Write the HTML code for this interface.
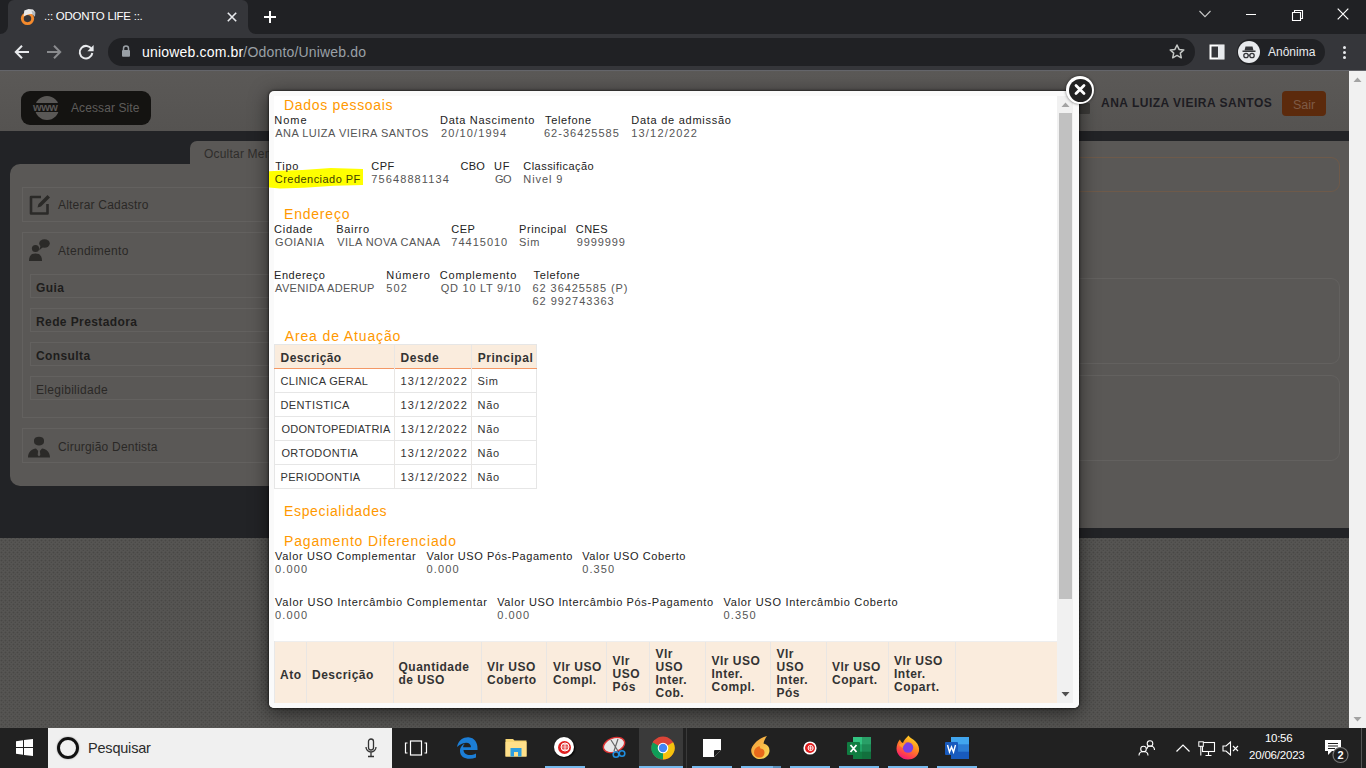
<!DOCTYPE html>
<html><head><meta charset="utf-8">
<style>
*{box-sizing:border-box;margin:0;padding:0}
html,body{width:1366px;height:768px;overflow:hidden}
body{position:relative;background:#202124;font-family:"Liberation Sans",sans-serif}
.a{position:absolute}
.t{position:absolute;white-space:nowrap;line-height:1}
</style></head><body>

<!-- ===== Chrome tab strip ===== -->
<div class="a" style="left:0;top:0;width:1366px;height:34px;background:#202124"></div>
<div class="a" style="left:8px;top:0;width:240px;height:34px;background:#35363a;border-radius:6px 6px 0 0"></div>
<svg class="a" style="left:0;top:26px" width="8" height="8"><path d="M8 0 V8 H0 A8 8 0 0 0 8 0Z" fill="#35363a"/></svg>
<svg class="a" style="left:248px;top:26px" width="8" height="8"><path d="M0 0 V8 H8 A8 8 0 0 1 0 0Z" fill="#35363a"/></svg>
<!-- favicon -->
<svg class="a" style="left:16px;top:6px" width="24" height="24" viewBox="0 0 24 24"><ellipse cx="11.5" cy="12.6" rx="5.2" ry="5" fill="none" stroke="#f58a2c" stroke-width="2.9"/><path d="M7.5 10.5 L8.3 4.5 L12.5 3 L17 3.6 L19.2 6.2 L19 10.5 L16.5 8.2 C13.5 7.8 10.5 8.8 7.5 10.5Z" fill="#e9e9e9"/><path d="M15.5 4.5 L19.2 6.2 L19 10.5 L16.5 8.2Z" fill="#b4b8bc"/></svg>
<div class="t" style="left:44px;top:11px;font-size:11.5px;color:#fff;letter-spacing:-0.25px">.:: ODONTO LIFE ::.</div>
<svg class="a" style="left:224px;top:9px" width="16" height="16"><path d="M3.8 3.8 L12.2 12.2 M12.2 3.8 L3.8 12.2" stroke="#e8eaed" stroke-width="1.6"/></svg>
<svg class="a" style="left:262px;top:9px" width="16" height="16"><path d="M8 2 V14 M2 8 H14" stroke="#fff" stroke-width="2"/></svg>
<!-- window controls -->
<svg class="a" style="left:1198px;top:8px" width="14" height="12"><path d="M1.5 3 L7 8.7 L12.5 3" stroke="#c8c8c8" stroke-width="1.1" fill="none"/></svg>
<div class="a" style="left:1246px;top:14px;width:10px;height:1px;background:#fff"></div>
<svg class="a" style="left:1290px;top:8px" width="14" height="14"><path d="M2.5 4.5 H10.5 V12.5 H2.5 Z M4.5 4.5 V2.5 H12.5 V10.5 H10.5" stroke="#fff" stroke-width="1.1" fill="none"/></svg>
<svg class="a" style="left:1336px;top:7px" width="14" height="14"><path d="M1.7 1.7 L12.3 12.3 M12.3 1.7 L1.7 12.3" stroke="#fff" stroke-width="1.2"/></svg>

<!-- ===== Chrome toolbar ===== -->
<div class="a" style="left:0;top:34px;width:1366px;height:36px;background:#35363a"></div>
<div class="a" style="left:0;top:70px;width:1366px;height:1px;background:#64656a"></div>
<svg class="a" style="left:12px;top:42px" width="20" height="20"><path d="M17 10 H4.5 M10 3.8 L3.8 10 L10 16.2" stroke="#e8eaed" stroke-width="2" fill="none"/></svg>
<svg class="a" style="left:44px;top:42px" width="20" height="20"><path d="M3 10 H15.5 M10 3.8 L16.2 10 L10 16.2" stroke="#8a8b8e" stroke-width="2" fill="none"/></svg>
<svg class="a" style="left:76px;top:42px" width="20" height="20"><path d="M15.6 7.2 A6.3 6.3 0 1 0 16.3 11" stroke="#e8eaed" stroke-width="2" fill="none"/><path d="M17.6 3 V9.2 H11.4 Z" fill="#e8eaed"/></svg>
<div class="a" style="left:108px;top:38px;width:1087px;height:28px;background:#202124;border-radius:14px"></div>
<svg class="a" style="left:120px;top:44px" width="12" height="14"><path d="M3.5 6 V4.5 A2.5 2.5 0 0 1 8.5 4.5 V6" stroke="#9aa0a6" stroke-width="1.5" fill="none"/><rect x="2" y="6" width="8" height="6.8" rx="1" fill="#9aa0a6"/></svg>
<div class="t" style="left:142px;top:45px;font-size:14px;color:#fff;letter-spacing:0.18px">unioweb.com.br<span style="color:#9aa0a6">/Odonto/Uniweb.do</span></div>
<svg class="a" style="left:1168px;top:43px" width="18" height="18" viewBox="0 0 18 18"><path d="M9 2 L11.1 6.4 L15.8 6.9 L12.3 10.1 L13.3 14.8 L9 12.4 L4.7 14.8 L5.7 10.1 L2.2 6.9 L6.9 6.4 Z" stroke="#c4c7c5" stroke-width="1.5" fill="none" stroke-linejoin="round"/></svg>
<svg class="a" style="left:1209px;top:44px" width="16" height="16"><rect x="1.5" y="1.5" width="13" height="13" fill="none" stroke="#fff" stroke-width="2"/><rect x="9" y="1" width="6" height="14" fill="#e8eaed"/></svg>
<div class="a" style="left:1237px;top:39px;width:88px;height:26px;background:#202124;border-radius:13px"></div>
<div class="a" style="left:1238px;top:41px;width:22px;height:22px;border-radius:50%;background:#e8eaed"></div>
<svg class="a" style="left:1238px;top:41px" width="22" height="22" viewBox="0 0 22 22"><path d="M7.5 5.5 H14.5 L15.5 9.5 H6.5 Z" fill="#35363a"/><rect x="4.5" y="9.5" width="13" height="1.5" fill="#35363a"/><circle cx="8" cy="14.5" r="2.2" fill="none" stroke="#35363a" stroke-width="1.3"/><circle cx="14" cy="14.5" r="2.2" fill="none" stroke="#35363a" stroke-width="1.3"/><path d="M10.2 14.3 H11.8" stroke="#35363a" stroke-width="1.2"/></svg>
<div class="t" style="left:1268px;top:46px;font-size:12px;color:#e8eaed">Anônima</div>
<div class="a" style="left:1343px;top:46px;width:3px;height:3px;border-radius:50%;background:#e8eaed"></div>
<div class="a" style="left:1343px;top:51px;width:3px;height:3px;border-radius:50%;background:#e8eaed"></div>
<div class="a" style="left:1343px;top:56px;width:3px;height:3px;border-radius:50%;background:#e8eaed"></div>

<!-- ===== Page (dimmed) ===== -->
<div class="a" style="left:0;top:71px;width:1349px;height:657px;background-color:#565553;background-image:radial-gradient(circle at 1.5px 1.5px,#494846 0.7px,transparent 1.2px),radial-gradient(circle at 3.5px 3.5px,#4b4a48 0.7px,transparent 1.2px);background-size:4px 4px,4px 4px"></div>
<div class="a" style="left:0;top:71px;width:1349px;height:60px;background:linear-gradient(#5b5957,#555351)"></div>
<div class="a" style="left:0;top:131px;width:1349px;height:407px;background:#222326"></div>
<!-- main panel right -->
<div class="a" style="left:290px;top:141px;width:1059px;height:387px;background:#5a5856"></div>
<div class="a" style="left:700px;top:157px;width:640px;height:35px;border:1px solid #6e5a4a;border-radius:9px"></div>
<div class="a" style="left:700px;top:278px;width:640px;height:86px;border:1px solid #63615f;border-radius:9px"></div>
<div class="a" style="left:700px;top:375px;width:640px;height:86px;border:1px solid #63615f;border-radius:9px"></div>
<!-- Ocultar menu tab + sidebar -->
<div class="a" style="left:190px;top:141px;width:100px;height:30px;background:#5a5856;border-radius:7px 7px 0 0"></div>
<div class="t" style="left:204px;top:148px;font-size:12px;color:#2f2d2b;letter-spacing:0.2px">Ocultar Menu</div>
<div class="a" style="left:10px;top:164px;width:300px;height:322px;background:#5a5856;border-radius:10px"></div>
<!-- sidebar items -->
<div class="a" style="left:22px;top:187px;width:300px;height:35px;border:1px solid #63615f"></div>
<svg class="a" style="left:28px;top:193px" width="24" height="23" viewBox="0 0 24 23"><path d="M13 4 H3 V20.5 H19.5 V11" stroke="#2b2a28" stroke-width="2.6" fill="none" stroke-linejoin="round"/><path d="M9.5 14.5 L10.5 11 L19.5 2 L22 4.5 L13 13.5 Z" fill="#2b2a28"/></svg>
<div class="t" style="left:58px;top:199px;font-size:12px;color:#2a2826;letter-spacing:0.2px">Alterar Cadastro</div>

<div class="a" style="left:22px;top:232px;width:300px;height:186px;border:1px solid #63615f"></div>
<svg class="a" style="left:28px;top:238px" width="24" height="24" viewBox="0 0 24 24"><circle cx="7.5" cy="10.5" r="3.6" fill="#2b2a28"/><path d="M1 23 C1 17.5 3.5 15.5 7.5 15.5 C11.5 15.5 14 17.5 14 23 Z" fill="#2b2a28"/><ellipse cx="16.5" cy="5.5" rx="5.3" ry="4.2" fill="#2b2a28"/><path d="M12.5 8 L11 12.5 L15 9Z" fill="#2b2a28"/></svg>
<div class="t" style="left:58px;top:245px;font-size:12px;color:#2a2826;letter-spacing:0.3px">Atendimento</div>
<div class="a" style="left:30px;top:274px;width:300px;height:24px;border:1px solid #63615f"></div>
<div class="t" style="left:36px;top:282px;font-size:12px;font-weight:bold;color:#1e1d1c;letter-spacing:0.4px">Guia</div>
<div class="a" style="left:30px;top:308px;width:300px;height:24px;border:1px solid #63615f"></div>
<div class="t" style="left:36px;top:316px;font-size:12px;font-weight:bold;color:#1e1d1c;letter-spacing:0.4px">Rede Prestadora</div>
<div class="a" style="left:30px;top:342px;width:300px;height:24px;border:1px solid #63615f"></div>
<div class="t" style="left:36px;top:350px;font-size:12px;font-weight:bold;color:#1e1d1c;letter-spacing:0.4px">Consulta</div>
<div class="a" style="left:30px;top:376px;width:300px;height:24px;border:1px solid #63615f"></div>
<div class="t" style="left:36px;top:384px;font-size:12px;color:#2a2826;letter-spacing:0.3px">Elegibilidade</div>

<div class="a" style="left:22px;top:428px;width:300px;height:35px;border:1px solid #63615f"></div>
<svg class="a" style="left:27px;top:434px" width="24" height="24" viewBox="0 0 24 24"><path d="M7 6 C7 1.5 17 1.5 17 6 V8 C17 12.5 7 12.5 7 8 Z" fill="#2b2a28"/><path d="M1 23.5 C1 17.5 5 15 9 14.5 L12 18 L15 14.5 C19 15 23 17.5 23 23.5 Z" fill="#2b2a28"/><path d="M11.2 16 L12.8 16 L13.3 21 L12 22.5 L10.7 21 Z" fill="#5a5856"/></svg>
<div class="t" style="left:58px;top:441px;font-size:12px;color:#2a2826;letter-spacing:0.2px">Cirurgião Dentista</div>

<!-- header -->
<div class="a" style="left:21px;top:91px;width:130px;height:34px;background:#141311;border-radius:9px"></div>
<div class="a" style="left:35px;top:96px;width:24px;height:24px;border-radius:50%;background:#5a5856"></div>
<div class="a" style="left:33px;top:103px;width:28px;height:9px;background:#141311"></div>
<div class="t" style="left:33px;top:102px;font-size:11px;font-weight:bold;color:#5a5856;letter-spacing:-0.4px">www</div>
<div class="t" style="left:71px;top:102px;font-size:12px;color:#5e5c5a;letter-spacing:0.1px">Acessar Site</div>
<div class="a" style="left:1079px;top:103px;width:11px;height:11px;background:#3b3a38;border-radius:1px"></div>
<div class="t" style="left:1101px;top:97px;font-size:12px;font-weight:bold;color:#1d1c22;letter-spacing:0.5px">ANA LUIZA VIEIRA SANTOS</div>
<div class="a" style="left:1282px;top:91px;width:44px;height:25px;background:#5c2a0c;border-radius:4px"></div>
<div class="t" style="left:1293px;top:99px;font-size:12.5px;color:#7e5a46">Sair</div>

<!-- page scrollbar -->
<div class="a" style="left:1349px;top:71px;width:17px;height:657px;background:#f1f1f1"></div>
<svg class="a" style="left:1349px;top:71px" width="17" height="17"><path d="M4.5 11 L8.5 6.5 L12.5 11Z" fill="#a3a3a3"/></svg>
<svg class="a" style="left:1349px;top:711px" width="17" height="17"><path d="M4.5 6 L8.5 10.5 L12.5 6Z" fill="#a3a3a3"/></svg>


<!-- ===== Modal ===== -->
<div class="a" style="left:269px;top:91px;width:810px;height:617px;background:#fafafa;border-radius:5px;box-shadow:0 4px 18px 1px rgba(0,0,0,.5),0 0 2px 1px rgba(0,0,0,.45)"></div>
<div class="a" style="left:274px;top:96px;width:799px;height:607px;background:#fff;overflow:hidden"></div>
<!-- highlight -->
<svg class="a" style="left:269px;top:167px" width="95" height="23" viewBox="0 0 95 23"><path d="M0 4.3 L10 3.8 L33.6 3 L61.8 1 L94 1.9 V18 L65 18.8 L35 20.8 L11 21.6 L0 20.4Z" fill="#ffff00"/></svg>
<!-- table 1 -->
<div class="a" style="left:274px;top:344px;width:263px;height:145px;border:1px solid #e6e6e6;background:#fff"></div>
<div class="a" style="left:275px;top:345px;width:261px;height:23px;background:#faecdd"></div>
<div class="a" style="left:274px;top:368px;width:263px;height:1px;background:#f39866"></div>
<div class="a" style="left:394px;top:345px;width:1px;height:143px;background:#e9e6e3"></div>
<div class="a" style="left:471px;top:345px;width:1px;height:143px;background:#e9e6e3"></div>
<div class="a" style="left:275px;top:392px;width:261px;height:1px;background:#e6e6e6"></div>
<div class="a" style="left:275px;top:416px;width:261px;height:1px;background:#e6e6e6"></div>
<div class="a" style="left:275px;top:440px;width:261px;height:1px;background:#e6e6e6"></div>
<div class="a" style="left:275px;top:464px;width:261px;height:1px;background:#e6e6e6"></div>
<div class="t" style="left:284.0px;top:98px;font-size:14px;color:#ff9900;letter-spacing:0.69px">Dados pessoais</div>
<div class="t" style="left:284.0px;top:207px;font-size:14px;color:#ff9900;letter-spacing:0.79px">Endereço</div>
<div class="t" style="left:284.7px;top:329px;font-size:14px;color:#ff9900;letter-spacing:0.87px">Area de Atuação</div>
<div class="t" style="left:284.0px;top:504px;font-size:14px;color:#ff9900;letter-spacing:0.65px">Especialidades</div>
<div class="t" style="left:284.0px;top:534px;font-size:14px;color:#ff9900;letter-spacing:0.85px">Pagamento Diferenciado</div>
<div class="t" style="left:274.3px;top:115px;font-size:11px;color:#222;letter-spacing:1.0px">Nome</div>
<div class="t" style="left:440.0px;top:115px;font-size:11px;color:#222;letter-spacing:0.71px">Data Nascimento</div>
<div class="t" style="left:545.0px;top:115px;font-size:11px;color:#222;letter-spacing:0.63px">Telefone</div>
<div class="t" style="left:631.3px;top:115px;font-size:11px;color:#222;letter-spacing:0.73px">Data de admissão</div>
<div class="t" style="left:275.2px;top:128px;font-size:11px;color:#555;letter-spacing:0.5px">ANA LUIZA VIEIRA SANTOS</div>
<div class="t" style="left:441.0px;top:128px;font-size:11px;color:#555;letter-spacing:1.11px">20/10/1994</div>
<div class="t" style="left:544.0px;top:128px;font-size:11px;color:#555;letter-spacing:1.0px">62-36425585</div>
<div class="t" style="left:631.3px;top:128px;font-size:11px;color:#555;letter-spacing:1.17px">13/12/2022</div>
<div class="t" style="left:275.3px;top:161px;font-size:11px;color:#222;letter-spacing:0.7px">Tipo</div>
<div class="t" style="left:371.3px;top:161px;font-size:11px;color:#222;letter-spacing:0.4px">CPF</div>
<div class="t" style="left:460.4px;top:161px;font-size:11px;color:#222;letter-spacing:0.35px">CBO</div>
<div class="t" style="left:494.0px;top:161px;font-size:11px;color:#222;letter-spacing:0.8px">UF</div>
<div class="t" style="left:523.3px;top:161px;font-size:11px;color:#222;letter-spacing:0.46px">Classificação</div>
<div class="t" style="left:274.8px;top:174px;font-size:11px;color:#404000;letter-spacing:0.46px">Credenciado PF</div>
<div class="t" style="left:371.3px;top:174px;font-size:11px;color:#555;letter-spacing:1.1px">75648881134</div>
<div class="t" style="left:495.0px;top:174px;font-size:11px;color:#555;letter-spacing:-0.6px">GO</div>
<div class="t" style="left:523.3px;top:174px;font-size:11px;color:#555;letter-spacing:0.92px">Nivel 9</div>
<div class="t" style="left:274.1px;top:224px;font-size:11px;color:#222;letter-spacing:0.7px">Cidade</div>
<div class="t" style="left:336.2px;top:224px;font-size:11px;color:#222;letter-spacing:0.7px">Bairro</div>
<div class="t" style="left:451.3px;top:224px;font-size:11px;color:#222;letter-spacing:0.4px">CEP</div>
<div class="t" style="left:519.0px;top:224px;font-size:11px;color:#222;letter-spacing:0.62px">Principal</div>
<div class="t" style="left:575.8px;top:224px;font-size:11px;color:#222;letter-spacing:0.4px">CNES</div>
<div class="t" style="left:275.1px;top:237px;font-size:11px;color:#555;letter-spacing:0.52px">GOIANIA</div>
<div class="t" style="left:337.2px;top:237px;font-size:11px;color:#555;letter-spacing:0.43px">VILA NOVA CANAA</div>
<div class="t" style="left:451.3px;top:237px;font-size:11px;color:#555;letter-spacing:1.0px">74415010</div>
<div class="t" style="left:519.0px;top:237px;font-size:11px;color:#555;letter-spacing:0.7px">Sim</div>
<div class="t" style="left:576.8px;top:237px;font-size:11px;color:#555;letter-spacing:0.88px">9999999</div>
<div class="t" style="left:274.1px;top:270px;font-size:11px;color:#222;letter-spacing:0.53px">Endereço</div>
<div class="t" style="left:386.3px;top:270px;font-size:11px;color:#222;letter-spacing:0.9px">Número</div>
<div class="t" style="left:439.8px;top:270px;font-size:11px;color:#222;letter-spacing:0.8px">Complemento</div>
<div class="t" style="left:533.5px;top:270px;font-size:11px;color:#222;letter-spacing:0.63px">Telefone</div>
<div class="t" style="left:275.1px;top:283px;font-size:11px;color:#555;letter-spacing:0.32px">AVENIDA ADERUP</div>
<div class="t" style="left:386.3px;top:283px;font-size:11px;color:#555;letter-spacing:1.1px">502</div>
<div class="t" style="left:440.8px;top:283px;font-size:11px;color:#555;letter-spacing:0.73px">QD 10 LT 9/10</div>
<div class="t" style="left:532.5px;top:283px;font-size:11px;color:#555;letter-spacing:0.93px">62 36425585 (P)</div>
<div class="t" style="left:532.5px;top:296px;font-size:11px;color:#555;letter-spacing:0.99px">62 992743363</div>
<div class="t" style="left:280.6px;top:352px;font-size:12px;font-weight:bold;color:#333;letter-spacing:0.4px">Descrição</div>
<div class="t" style="left:400.6px;top:352px;font-size:12px;font-weight:bold;color:#333;letter-spacing:0.5px">Desde</div>
<div class="t" style="left:477.7px;top:352px;font-size:12px;font-weight:bold;color:#333;letter-spacing:0.55px">Principal</div>
<div class="t" style="left:280.4px;top:376px;font-size:11px;color:#333;letter-spacing:0.37px">CLINICA GERAL</div>
<div class="t" style="left:400.4px;top:376px;font-size:11px;color:#333;letter-spacing:1.27px">13/12/2022</div>
<div class="t" style="left:477.5px;top:376px;font-size:11px;color:#333;letter-spacing:0.7px">Sim</div>
<div class="t" style="left:280.4px;top:400px;font-size:11px;color:#333;letter-spacing:0.4px">DENTISTICA</div>
<div class="t" style="left:400.4px;top:400px;font-size:11px;color:#333;letter-spacing:1.27px">13/12/2022</div>
<div class="t" style="left:477.5px;top:400px;font-size:11px;color:#333;letter-spacing:0.7px">Não</div>
<div class="t" style="left:281.4px;top:424px;font-size:11px;color:#333;letter-spacing:0.25px">ODONTOPEDIATRIA</div>
<div class="t" style="left:400.4px;top:424px;font-size:11px;color:#333;letter-spacing:1.27px">13/12/2022</div>
<div class="t" style="left:477.5px;top:424px;font-size:11px;color:#333;letter-spacing:0.7px">Não</div>
<div class="t" style="left:281.4px;top:448px;font-size:11px;color:#333;letter-spacing:0.4px">ORTODONTIA</div>
<div class="t" style="left:400.4px;top:448px;font-size:11px;color:#333;letter-spacing:1.27px">13/12/2022</div>
<div class="t" style="left:477.5px;top:448px;font-size:11px;color:#333;letter-spacing:0.7px">Não</div>
<div class="t" style="left:280.4px;top:472px;font-size:11px;color:#333;letter-spacing:0.4px">PERIODONTIA</div>
<div class="t" style="left:400.4px;top:472px;font-size:11px;color:#333;letter-spacing:1.27px">13/12/2022</div>
<div class="t" style="left:477.5px;top:472px;font-size:11px;color:#333;letter-spacing:0.7px">Não</div>
<div class="t" style="left:275.1px;top:551px;font-size:11px;color:#222;letter-spacing:0.65px">Valor USO Complementar</div>
<div class="t" style="left:426.6px;top:551px;font-size:11px;color:#222;letter-spacing:0.55px">Valor USO Pós-Pagamento</div>
<div class="t" style="left:582.2px;top:551px;font-size:11px;color:#222;letter-spacing:0.58px">Valor USO Coberto</div>
<div class="t" style="left:275.1px;top:564px;font-size:11px;color:#555;letter-spacing:1.1px">0.000</div>
<div class="t" style="left:426.6px;top:564px;font-size:11px;color:#555;letter-spacing:1.1px">0.000</div>
<div class="t" style="left:582.2px;top:564px;font-size:11px;color:#555;letter-spacing:1.1px">0.350</div>
<div class="t" style="left:275.1px;top:597px;font-size:11px;color:#222;letter-spacing:0.74px">Valor USO Intercâmbio Complementar</div>
<div class="t" style="left:497.2px;top:597px;font-size:11px;color:#222;letter-spacing:0.64px">Valor USO Intercâmbio Pós-Pagamento</div>
<div class="t" style="left:723.6px;top:597px;font-size:11px;color:#222;letter-spacing:0.7px">Valor USO Intercâmbio Coberto</div>
<div class="t" style="left:275.1px;top:610px;font-size:11px;color:#555;letter-spacing:1.1px">0.000</div>
<div class="t" style="left:497.2px;top:610px;font-size:11px;color:#555;letter-spacing:1.1px">0.000</div>
<div class="t" style="left:723.6px;top:610px;font-size:11px;color:#555;letter-spacing:1.1px">0.350</div>
<!-- table 2 header -->
<div class="a" style="left:274px;top:641px;width:783px;height:62px;background:#faecdd;border-top:1px solid #eee"></div>
<div class="a" style="left:274px;top:641px;width:1px;height:62px;background:#e8e8e8"></div>
<div class="a" style="left:306px;top:642px;width:1px;height:61px;background:#e9e6e3"></div>
<div class="a" style="left:393px;top:642px;width:1px;height:61px;background:#e9e6e3"></div>
<div class="a" style="left:481px;top:642px;width:1px;height:61px;background:#e9e6e3"></div>
<div class="a" style="left:546px;top:642px;width:1px;height:61px;background:#e9e6e3"></div>
<div class="a" style="left:606px;top:642px;width:1px;height:61px;background:#e9e6e3"></div>
<div class="a" style="left:649px;top:642px;width:1px;height:61px;background:#e9e6e3"></div>
<div class="a" style="left:705px;top:642px;width:1px;height:61px;background:#e9e6e3"></div>
<div class="a" style="left:770px;top:642px;width:1px;height:61px;background:#e9e6e3"></div>
<div class="a" style="left:826px;top:642px;width:1px;height:61px;background:#e9e6e3"></div>
<div class="a" style="left:888px;top:642px;width:1px;height:61px;background:#e9e6e3"></div>
<div class="a" style="left:955px;top:642px;width:1px;height:61px;background:#e9e6e3"></div>
<div class="t" style="left:280px;top:669px;font-size:12px;font-weight:bold;color:#333;letter-spacing:0.5px">Ato</div>
<div class="t" style="left:312px;top:669px;font-size:12px;font-weight:bold;color:#333;letter-spacing:0.5px">Descrição</div>
<div class="t" style="left:398.5px;top:661px;font-size:12px;font-weight:bold;color:#333;letter-spacing:0.5px;line-height:13px">Quantidade<br>de USO</div>
<div class="t" style="left:487px;top:661px;font-size:12px;font-weight:bold;color:#333;letter-spacing:0.5px;line-height:13px">Vlr USO<br>Coberto</div>
<div class="t" style="left:553px;top:661px;font-size:12px;font-weight:bold;color:#333;letter-spacing:0.5px;line-height:13px">Vlr USO<br>Compl.</div>
<div class="t" style="left:612.5px;top:655px;font-size:12px;font-weight:bold;color:#333;letter-spacing:0.5px;line-height:13px">Vlr<br>USO<br>Pós</div>
<div class="t" style="left:655.5px;top:648px;font-size:12px;font-weight:bold;color:#333;letter-spacing:0.5px;line-height:13px">Vlr<br>USO<br>Inter.<br>Cob.</div>
<div class="t" style="left:711.5px;top:655px;font-size:12px;font-weight:bold;color:#333;letter-spacing:0.5px;line-height:13px">Vlr USO<br>Inter.<br>Compl.</div>
<div class="t" style="left:776.5px;top:648px;font-size:12px;font-weight:bold;color:#333;letter-spacing:0.5px;line-height:13px">Vlr<br>USO<br>Inter.<br>Pós</div>
<div class="t" style="left:832px;top:661px;font-size:12px;font-weight:bold;color:#333;letter-spacing:0.5px;line-height:13px">Vlr USO<br>Copart.</div>
<div class="t" style="left:894px;top:655px;font-size:12px;font-weight:bold;color:#333;letter-spacing:0.5px;line-height:13px">Vlr USO<br>Inter.<br>Copart.</div>
<!-- white strip over table bottom (modal padding) -->
<div class="a" style="left:269px;top:703px;width:810px;height:5px;background:#fafafa;border-radius:0 0 5px 5px"></div>
<!-- modal scrollbar -->
<div class="a" style="left:1057px;top:96px;width:16px;height:607px;background:#f1f1f1"></div>
<div class="a" style="left:1059px;top:113px;width:13px;height:486px;background:#c1c1c1"></div>
<svg class="a" style="left:1057px;top:96px" width="16" height="16"><path d="M4.5 11 L8.5 6.5 L12.5 11Z" fill="#a3a3a3"/></svg>
<svg class="a" style="left:1057px;top:687px" width="16" height="16"><path d="M4.5 5 L8.5 9.5 L12.5 5Z" fill="#505050"/></svg>
<!-- close button -->
<div class="a" style="left:1066px;top:76px;width:28px;height:28px;border-radius:50%;background:#fff;box-shadow:0 0 3px rgba(0,0,0,.6)"></div>
<div class="a" style="left:1068.5px;top:78.5px;width:23px;height:23px;border-radius:50%;background:#222"></div>
<svg class="a" style="left:1066px;top:76px" width="28" height="28"><path d="M10 9.6 L18 17.6 M18 9.6 L10 17.6" stroke="#fff" stroke-width="2.8" stroke-linecap="round"/></svg>

<!-- ===== Taskbar ===== -->
<div class="a" style="left:0;top:728px;width:1366px;height:40px;background:#212121"></div>
<svg class="a" style="left:16px;top:739px" width="17" height="17" viewBox="0 0 17 17"><path d="M0 2.3 L7 1.3 V8 H0Z M8 1.1 L17 0 V8 H8Z M0 9 H7 V15.7 L0 14.7Z M8 9 H17 V17 L8 15.9Z" fill="#fff"/></svg>
<div class="a" style="left:48px;top:728px;width:344px;height:40px;background:#f0f0f0"></div>
<div class="a" style="left:57px;top:737px;width:22px;height:22px;border-radius:50%;border:3px solid #111;box-shadow:0 0 1.5px #777"></div>
<div class="t" style="left:88px;top:741px;font-size:14.5px;color:#2b2b2b;letter-spacing:-0.2px">Pesquisar</div>
<svg class="a" style="left:364px;top:738px" width="14" height="20" viewBox="0 0 14 20"><rect x="4.5" y="1" width="5" height="11" rx="2.5" fill="none" stroke="#333" stroke-width="1.3"/><path d="M2 9 A5 5 0 0 0 12 9 M7 14 V18 M4 18.5 H10" fill="none" stroke="#333" stroke-width="1.3"/></svg>
<!-- task view -->
<svg class="a" style="left:404px;top:740px" width="24" height="16" viewBox="0 0 24 16"><rect x="6.5" y="1" width="11" height="14" fill="none" stroke="#fff" stroke-width="1.2"/><path d="M3.5 3 H1.5 V13 H3.5 M20.5 3 H22.5 V13 H20.5" fill="none" stroke="#fff" stroke-width="1.2"/></svg>
<!-- edge -->
<svg class="a" style="left:456px;top:737px" width="22" height="22" viewBox="0 0 22 22"><path d="M1 10 C2 3 8 0 12.5 0.3 C18.5 0.8 21.5 5.5 21.5 11.5 V13 H7.5 C7.8 18 14 19.5 20 16.5 V20.5 C13 23.5 4 21.5 4 14 C4 10 6.5 7.5 9 6.5 C7.5 8 7 9.5 7.2 10.2 H15 C15 5 8.5 3.5 1 10Z" fill="#1c7ed6"/></svg>
<!-- explorer -->
<svg class="a" style="left:505px;top:738px" width="22" height="20" viewBox="0 0 22 20"><path d="M0.5 1 H8 L9.5 2.5 H21.5 V18.5 H0.5Z" fill="#f8d775"/><path d="M0.5 4 H21.5 V18.5 H0.5Z" fill="#ffe08a"/><path d="M5.5 10 H16.5 V18.5 H13 V14 H9 V18.5 H5.5Z" fill="#2d9fe0"/></svg>
<!-- red globe app -->
<div class="a" style="left:554px;top:737px;width:20px;height:20px;border-radius:50%;background:#fff;box-shadow:1px 1px 2px #000"></div>
<div class="a" style="left:557.5px;top:740.5px;width:13px;height:13px;border-radius:50%;background:#e02020"></div>
<svg class="a" style="left:557px;top:740px" width="14" height="14" viewBox="0 0 14 14"><circle cx="8" cy="7" r="4" fill="none" stroke="#fff" stroke-width="1"/><path d="M4 7 H12 M8 3 V11 M5 4.8 H11 M5 9.2 H11" stroke="#fff" stroke-width=".8"/></svg>
<div class="a" style="left:545px;top:766px;width:40px;height:2px;background:#76b9ed"></div>
<!-- snipping -->
<svg class="a" style="left:602px;top:736px" width="26" height="24" viewBox="0 0 26 24"><ellipse cx="12" cy="9" rx="11" ry="7" fill="#e8e8e8" stroke="#d33" stroke-width="1.4" transform="rotate(-20 12 9)"/><path d="M9 4 L16 15 M16 3 L12 15" stroke="#666" stroke-width="1.2"/><circle cx="14" cy="18.5" r="2.8" fill="none" stroke="#1f8fe0" stroke-width="1.6"/><circle cx="20" cy="17.5" r="2.8" fill="none" stroke="#1f8fe0" stroke-width="1.6"/></svg>
<!-- chrome active -->
<div class="a" style="left:639px;top:728px;width:44px;height:40px;background:#3a3a3a"></div>
<svg class="a" style="left:651px;top:736px" width="24" height="24" viewBox="0 0 24 24"><circle cx="12" cy="12" r="11.5" fill="#db4437"/><path d="M12 12 L22.2 6.3 A11.5 11.5 0 0 1 12 23.5Z" fill="#f4c20d"/><path d="M12 12 L12 23.5 A11.5 11.5 0 0 1 1.8 6.3Z" fill="#0f9d58"/><path d="M12 12 L1.8 6.3 A11.5 11.5 0 0 1 3.5 4Z" fill="#db4437"/><circle cx="12" cy="12" r="5.3" fill="#fff"/><circle cx="12" cy="12" r="4.2" fill="#4285f4"/></svg>
<div class="a" style="left:639px;top:766px;width:44px;height:2px;background:#76b9ed"></div>
<div class="a" style="left:686px;top:728px;width:1px;height:40px;background:#3a3a3a"></div>
<!-- sticky notes -->
<svg class="a" style="left:702px;top:738px" width="20" height="20" viewBox="0 0 20 20"><path d="M1 1 H19 V12 L12 19 H1Z" fill="#fff"/><path d="M12 19 L19 12 H13 Q12 12 12 13Z" fill="#1f1f1f"/></svg>
<div class="a" style="left:692px;top:766px;width:40px;height:2px;background:#76b9ed"></div>
<!-- flame app -->
<svg class="a" style="left:750px;top:735px" width="22" height="25" viewBox="0 0 22 25"><defs><linearGradient id="fg" x1="0" y1="0" x2="1" y2="1"><stop offset="0" stop-color="#f39a3a"/><stop offset=".6" stop-color="#f8c04a"/><stop offset="1" stop-color="#f6e05a"/></linearGradient></defs><path d="M17 1 C12 2 4 6.5 1.5 13.5 C0 18.5 4 24 10 24 C15.5 24 19.5 20 19.5 15.5 C19.5 12 17.5 9.5 13.5 8.5 C14 5.5 15.5 3 17 1Z" fill="url(#fg)"/><path d="M9.5 11 C6 12 4 14.5 4 17.5 C4 20.5 6.5 22.5 9.5 22.5 C12.5 22.5 14.5 20.5 14.5 17.5 C14.5 15 12.5 13.5 10.5 13.5 C10 12.5 9.5 11.8 9.5 11Z" fill="#e8691b"/></svg>
<div class="a" style="left:741px;top:766px;width:32px;height:2px;background:#76b9ed"></div><div class="a" style="left:773px;top:766px;width:8px;height:2px;background:#5a8fba"></div>
<!-- small red -->
<svg class="a" style="left:802px;top:740px" width="16" height="16" viewBox="0 0 16 16"><circle cx="8" cy="8" r="6.6" fill="#fff"/><circle cx="8" cy="8" r="5" fill="#e21b1b"/><circle cx="8.6" cy="8" r="2.6" fill="none" stroke="#fff" stroke-width=".9"/><path d="M8.6 5.4 V10.6 M6 8 H11.2" stroke="#fff" stroke-width=".8"/></svg>
<div class="a" style="left:790px;top:766px;width:40px;height:2px;background:#76b9ed"></div>
<!-- excel -->
<svg class="a" style="left:847px;top:737px" width="24" height="22" viewBox="0 0 24 22"><rect x="6" y="0" width="18" height="22" rx="1" fill="#21a366"/><rect x="6" y="0" width="18" height="7.3" fill="#33c481"/><rect x="6" y="14.7" width="18" height="7.3" fill="#107c41"/><rect x="15" y="0" width="9" height="22" fill="#185c37" opacity=".35"/><rect x="0" y="5" width="13" height="13" rx="1" fill="#107c41"/><path d="M3.5 8 L9.5 15 M9.5 8 L3.5 15" stroke="#fff" stroke-width="1.8"/></svg>
<div class="a" style="left:839px;top:766px;width:40px;height:2px;background:#76b9ed"></div>
<!-- firefox -->
<svg class="a" style="left:896px;top:735px" width="24" height="25" viewBox="0 0 24 25"><defs><linearGradient id="ffg" x1=".8" y1="0" x2=".3" y2="1"><stop offset="0" stop-color="#ffe226"/><stop offset=".45" stop-color="#ff8a1f"/><stop offset=".8" stop-color="#ff3d4f"/><stop offset="1" stop-color="#f0137f"/></linearGradient></defs><path d="M12.5 0.5 C14 3 17 4 19.5 6.5 C22.5 9.5 23.5 13 23 16 C22 21 17.5 24.5 12 24.5 C5.5 24.5 0.5 19.5 0.5 13.5 C0.5 10 2 6.5 4 4.5 C4.5 6.5 5.5 7.5 7 8 C7.5 5.5 10 3 12.5 0.5Z" fill="url(#ffg)"/><circle cx="12" cy="12.5" r="5.2" fill="#7b3fe4"/><path d="M3 9.5 C5 8 8 7.5 10 8.5 C8 9.5 7 11 7 13 C5 12 3.5 11 3 9.5Z" fill="#ff9a2a"/></svg>
<div class="a" style="left:888px;top:766px;width:40px;height:2px;background:#76b9ed"></div>
<!-- word -->
<svg class="a" style="left:945px;top:737px" width="24" height="22" viewBox="0 0 24 22"><rect x="6" y="0" width="18" height="22" rx="1" fill="#2b7cd3"/><rect x="6" y="0" width="18" height="7.3" fill="#41a5ee"/><rect x="6" y="14.7" width="18" height="7.3" fill="#185abd"/><rect x="0" y="5" width="13" height="13" rx="1" fill="#185abd"/><path d="M2.5 8 L4.5 15 L6.5 10 L8.5 15 L10.5 8" stroke="#fff" stroke-width="1.4" fill="none"/></svg>
<div class="a" style="left:937px;top:766px;width:40px;height:2px;background:#76b9ed"></div>
<!-- tray -->
<svg class="a" style="left:1138px;top:739px" width="18" height="18" viewBox="0 0 18 18"><circle cx="5.5" cy="10" r="2.8" fill="none" stroke="#fff" stroke-width="1.1"/><path d="M1 16.5 C1 13.5 3 12.5 5.5 12.5 C8 12.5 10 13.5 10 16.5" fill="none" stroke="#fff" stroke-width="1.1"/><circle cx="12" cy="4.5" r="2.8" fill="none" stroke="#fff" stroke-width="1.1"/><path d="M8.8 10 C9 8 10.3 7 12 7 C14.5 7 16.5 8 16.5 11" fill="none" stroke="#fff" stroke-width="1.1"/></svg>
<svg class="a" style="left:1175px;top:742px" width="16" height="12"><path d="M1.5 9.5 L8 3 L14.5 9.5" stroke="#fff" stroke-width="1.2" fill="none"/></svg>
<svg class="a" style="left:1198px;top:741px" width="18" height="16" viewBox="0 0 18 16"><rect x="4.5" y="1.5" width="12" height="9" fill="none" stroke="#fff" stroke-width="1.1"/><rect x="0.8" y="0.8" width="4.5" height="4.5" fill="#1f1f1f" stroke="#fff" stroke-width="1"/><path d="M2.8 5 V14.5 M10.5 10.5 V14 M7.5 14.5 H13.5" stroke="#fff" stroke-width="1.1"/></svg>
<svg class="a" style="left:1222px;top:741px" width="18" height="15" viewBox="0 0 18 15"><path d="M1 5 H4 L8.5 1 V14 L4 10 H1Z" fill="none" stroke="#fff" stroke-width="1.1"/><path d="M11 5 L16 10 M16 5 L11 10" stroke="#fff" stroke-width="1.1"/></svg>
<div class="t" style="left:1265px;top:733px;font-size:11.5px;color:#fff;letter-spacing:-0.3px">10:56</div>
<div class="t" style="left:1249px;top:750px;font-size:11.5px;color:#fff;letter-spacing:-0.2px">20/06/2023</div>
<svg class="a" style="left:1324px;top:739px" width="28" height="26" viewBox="0 0 28 26"><path d="M1 1 H17 V12 H8 L4 16 V12 H1Z" fill="#fff"/><path d="M4 4.5 H14 M4 7 H14 M4 9.5 H11" stroke="#1f1f1f" stroke-width="1"/><circle cx="16.5" cy="16" r="7.5" fill="#1f1f1f" stroke="#777" stroke-width="1.2"/><text x="16.5" y="20" font-family="Liberation Sans" font-size="11" font-weight="bold" fill="#fff" text-anchor="middle">2</text></svg>
<div class="a" style="left:1361px;top:728px;width:1px;height:40px;background:#555"></div>

</body></html>
